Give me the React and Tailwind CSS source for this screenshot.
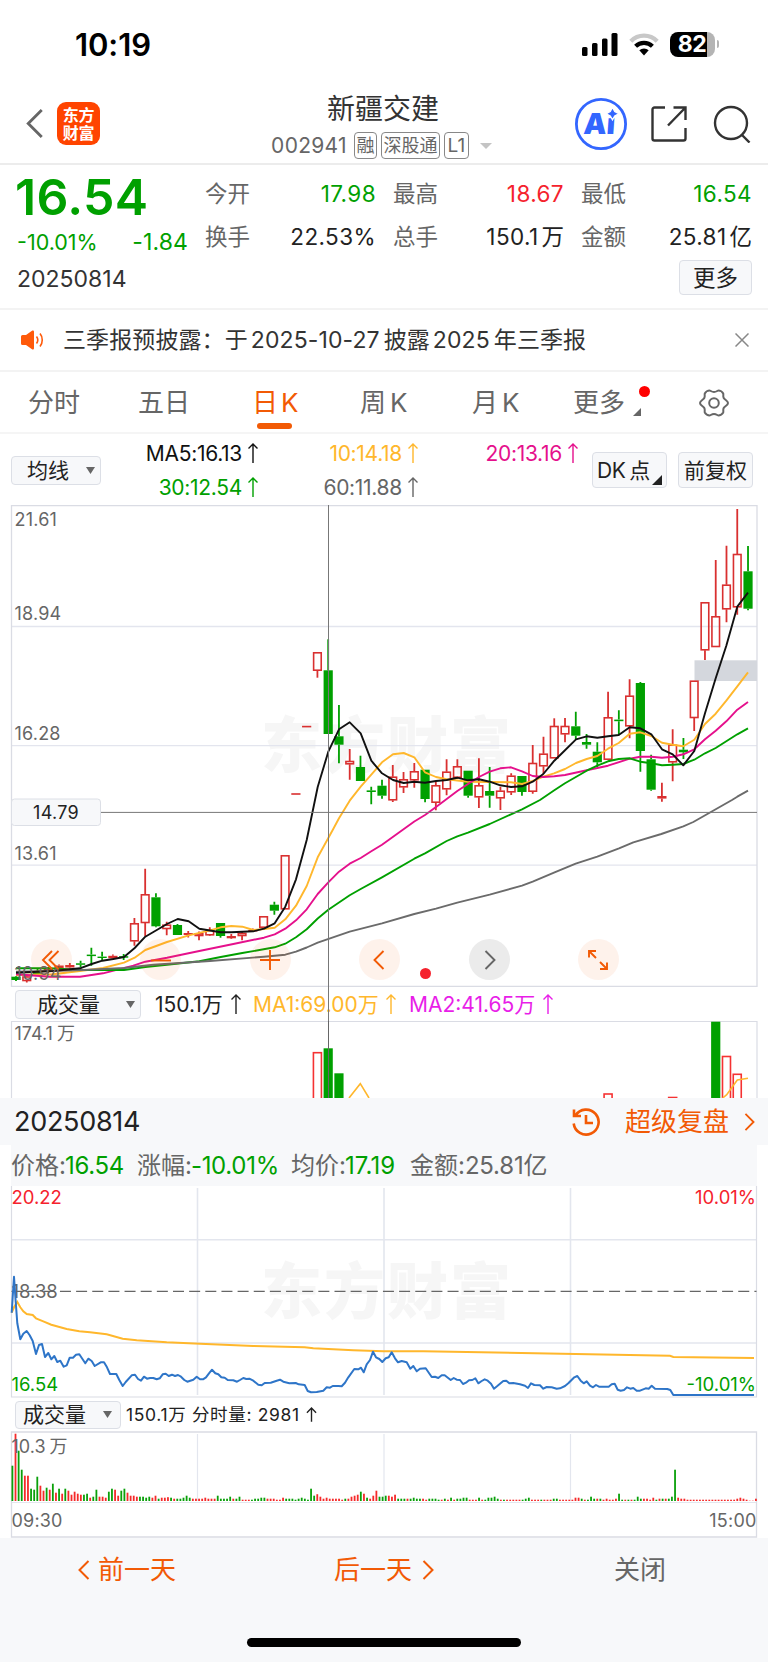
import clsx from "clsx";

const GREEN = "#00a000";
const RED = "#d93030";

// [type, high, bodyTop, bodyBottom, low], one entry per trading day
const CANDLES = [
  ["g", 976, 976.7, 980, 981], ["r", 975, 976.5, 981, 982.5], ["g", 969, 972, 974, 976], ["r", 967, 969, 971, 973],
  ["f", 964.5, 965.5, 968, 969], ["f", 963, 965, 967.5, 968.5], ["g", 960.7, 963.3, 964.8, 967], ["g", 947.7, 954.6, 956.1, 965.7],
  ["g", 951.7, 956.6, 958, 960.5], ["f", 954.5, 955.8, 958.3, 959.5], ["g", 954, 956.2, 957.7, 960], ["r", 918, 923.3, 941.3, 945.7],
  ["r", 868.7, 894.3, 923, 936], ["g", 893.3, 897.3, 926.3, 927.3], ["r", 921.7, 924.7, 929, 935.3], ["g", 924, 925, 935, 935],
  ["f", 931, 933, 935, 937.5], ["r", 931.5, 933.3, 936, 940.3], ["r", 927.3, 930, 935.3, 936], ["g", 923, 923, 936, 937.7],
  ["f", 934, 936, 938.3, 939], ["r", 932, 933, 936, 940.3], ["f", 928.5, 930, 931.5, 932], ["r", 916.3, 916.3, 927.7, 928],
  ["g", 901.7, 904.7, 910.7, 914.7], ["r", 855.3, 855.3, 909.3, 909.3], ["f", 793.2, 793.2, 794.8, 794.8], ["f", 725.8, 725.8, 727.4, 727.4],
  ["r", 652.3, 652.3, 670.7, 677.7], ["g", 639.3, 670.3, 734, 734], ["g", 705, 736.3, 744.7, 763.3], ["r", 749, 761, 764.3, 779.7],
  ["g", 755.7, 767, 781, 781], ["g", 786.7, 790.4, 792, 804.3], ["g", 779.7, 785.7, 795.7, 798.7], ["r", 765, 776.7, 800.3, 802],
  ["r", 772, 779.3, 787.3, 793], ["r", 763, 771.3, 780.3, 787.7], ["g", 769.7, 769.7, 799, 802.3], ["r", 781.7, 785.3, 802.7, 810.3],
  ["r", 759.3, 771.7, 789.3, 795.3], ["r", 759.3, 766.3, 777.7, 779], ["g", 770.7, 770.7, 795.7, 797.7], ["r", 758.3, 785.3, 797.3, 808],
  ["g", 767, 791, 795.7, 807.7], ["r", 786.7, 790.7, 798.3, 810], ["r", 773.3, 775.7, 792.3, 795], ["g", 776, 776, 792, 795.7],
  ["r", 745, 763, 791.7, 793.7], ["r", 736.7, 753.7, 766.3, 773.7], ["r", 718.3, 726, 758.3, 758.3], ["r", 718, 726, 734.3, 742.3],
  ["g", 711.7, 726.3, 735.7, 739], ["g", 734, 742, 744.7, 748.7], ["g", 742.3, 751.7, 762.3, 767], ["r", 691.7, 717.3, 759.7, 759.7],
  ["g", 710.3, 719.6, 721.2, 735.3], ["r", 679.3, 695.7, 726.3, 738.3], ["g", 682, 683, 751, 771.7], ["g", 754.7, 759.3, 789.7, 790.7],
  ["f", 782.7, 796, 798.6, 801.7], ["r", 729.3, 744.7, 762.3, 781.3], ["g", 738, 749.7, 752.3, 759], ["r", 680.7, 680.7, 718, 731],
  ["r", 602.3, 602.3, 650.3, 660], ["r", 560, 616.3, 647, 647], ["r", 545.7, 584.7, 609.3, 622.3], ["r", 509, 554, 607.3, 614.7],
  ["g", 546, 571.3, 608.7, 610.3],
];

const MA_LINES = [
  {
    color: "#ffb72c",
    points: "16,975 53,974.3 80,971 103,968 124,962.7 134.7,957.7 145.3,950 167,942 188.7,935.3 210,930.3 220.7,927.3 231.3,926 242.3,926.7 253.3,930 264,929 274.7,927.7 285.3,919.3 296,905.7 306.7,886 317.7,857.3 332.7,830 339,818.3 349.7,800.7 360.7,786.7 371.3,774.7 382,762.3 393,754.3 403.7,753 414.3,757.3 425,772.3 436,777 446.7,779.3 468,781.7 489.7,782 511,782.3 522,784 532.7,781 543.3,776.7 554,773.3 565,769 576,763 586.7,759 597.3,756 608,748.7 618.7,743 629.7,733.7 640.3,732.3 651.3,736 662,742.7 672.7,744.7 683.3,746.3 694.3,739.7 705,724 715.7,713.7 726.3,700.7 737.3,686.3 748,672.3",
  },
  {
    color: "#e5108c",
    points: "16,974.3 50,976.7 80,976.7 103,973.3 133.3,965.7 145.3,961.7 167,957.7 199.3,951 233.3,944 264,937.7 274.7,934.3 285.3,928.7 296,920.3 306.7,909.3 317.7,894 328.3,882.3 339,871.7 349.7,863.7 360.7,858 371.3,851.3 382,844.7 414.3,821.5 425,815 436,807 446.7,799 457.3,791 468,784 479,777 489.7,771.7 500.3,768.3 511,767.3 522,771.3 532.7,776 543.3,777 554.3,776.3 565,775 586.7,770.3 608,765.7 629.7,758.7 640.3,756.7 651.3,756.7 662,757.7 672.7,756.7 683.3,754.3 694.3,749.3 705,739.3 715.7,730.7 726.3,721.3 737.3,709.7 748,702",
  },
  {
    color: "#00a000",
    points: "16,968.3 50,968.3 80,970 124,970 145.3,967 167,964.7 199.3,961.3 220.7,957 242.3,953 274.7,947.3 285.3,943.7 296,937.3 306.7,929.3 317.7,918.5 328.3,909.7 349.7,895.3 360.7,889 382,877.3 414.3,858.7 425,853.3 446.7,841 457.3,836.3 468,832.7 489.7,824 511,814.3 522,809.3 540,800 554.3,790.3 565,783.3 586.7,770.7 597.3,765.7 608,761.3 618.7,759 629.7,758.3 640.3,761.7 651.3,763.3 662,765.3 672.7,764.7 683.3,764 694.3,759.7 705,753.3 715.7,748 726.3,741.3 737.3,734.3 748,728.3",
  },
  {
    color: "#6b6b6b",
    points: "16,971.7 50,971 83,970 124,968 153.3,964.7 210,961 264,956.7 285.3,954.7 296,951.7 306.7,947.5 317.7,942.7 349.7,931.7 382,923.3 414.3,914 436,908.7 457.3,902.7 489.7,894.7 522,885.7 532.7,881.7 554,872.7 575.7,863.7 597.3,856.7 619,848.3 633.3,842.3 661.3,834 683.3,826.3 693.3,822 732,800 737.3,796.7 748,790.7",
  },
  {
    color: "#111111",
    points: "16,972.7 53,971 80,968.3 91.7,964 102.3,960.7 113.3,959 124,957 134.7,948 145.3,936.7 167,924 177.7,919 188.7,921.3 199.3,928.7 220.7,932.3 231.3,932.3 253.3,931.3 264,928.7 274.7,923.3 285.3,906.7 296,879.3 306.7,840 317.7,787 328.3,751.7 339,729.3 349.7,722.3 360.7,733.3 371.3,760.7 382,773.3 393,780 403.7,783 414.3,781.7 425,782.7 436,781 446.7,780 457.3,777.7 468,780.3 479,779.3 489.7,781.7 500.3,785.3 511,787 522,786.3 532.7,781.7 543.3,774 554.3,760.7 565,750.3 576,739.3 586.7,736.3 597.3,737.7 608,736.3 618.7,735 629.7,727.3 640.3,728.3 651.3,734.3 662,749.3 672.7,754.3 683.3,765.3 694.3,751 705,713.3 715.7,678.3 726.3,645.7 737.3,606.7 748,592.7",
  },
];

const PRICE_LINE =
  "11.7,1312.7 14,1276.7 15.7,1301.7 17.3,1323.3 20.3,1339.3 23.3,1333.7 26.7,1331 29.7,1335.3 32.7,1341 36,1354 39,1345 42,1344 45,1357 48.3,1353 51.3,1359.3 54.3,1356 57.3,1362 60.3,1360.7 63.7,1366.7 66.7,1365.3 69.7,1357.7 73,1357.7 76,1354.7 79.3,1354.3 82.3,1358.7 85.3,1363.3 88.3,1358.7 91.7,1361 94.7,1366 100.7,1362.3 104,1362.3 107,1367.3 110,1374 116.3,1374 119.3,1380 122.7,1386 125.7,1382 131.7,1375.3 135,1374.7 138,1379 141,1380.7 144,1376.7 147,1378.7 150,1378 153.3,1378 156.7,1379.3 159.7,1378.3 162.7,1374.3 165.7,1373.7 168.7,1376 172,1374.7 175,1376 178,1375 181,1376.7 184.3,1380 187.3,1381.7 193.3,1379.7 196.7,1376.7 200,1379.3 203,1379.3 206,1377.3 209,1373.3 212,1369.7 215.3,1373.3 218.3,1374.3 221.3,1377.3 224.7,1377.7 227.7,1380 233.3,1380.3 237,1381.7 240,1380 243.3,1378 246.3,1379 249.3,1378.7 253.3,1380.7 258.3,1384.7 261.7,1385.3 264.7,1383 270.7,1382.7 276.7,1380.7 280,1379.7 283.3,1381.7 289.3,1383.3 295.7,1383 298.7,1384.3 304.7,1385 307.7,1391 311,1392.3 316.7,1392 323.3,1390.7 326.7,1387.3 330,1387.7 332.7,1386 338.3,1386 341.7,1386.3 345,1382.7 348.3,1377.3 354.3,1369 358.3,1369.3 361,1367.7 363.7,1372.3 366.7,1364.3 370,1360 373,1351.7 376,1357.3 379.3,1359 382.3,1362 385.7,1358.3 388.7,1357.3 391.7,1352.3 395,1358.3 398,1362.3 401.7,1361 406.7,1362.3 410.3,1368.7 413.3,1366 416.7,1371.3 420,1368.7 425.7,1368.3 431.7,1377 435,1376.7 438.3,1378 441.7,1375.3 444.7,1375.3 450.7,1380 453.7,1378 456.7,1379.7 460,1380 463,1384 466,1382.7 469,1380.3 472.3,1380 475.3,1378.3 478.3,1383.3 481.7,1381 484.7,1379.3 487.7,1380.7 491,1383.7 494,1388.7 497,1386.3 503.3,1381 506.3,1380.7 509.3,1383.3 513.3,1383 520,1384.3 525,1385.7 528,1388 531,1383.3 534.3,1385 540,1385.3 543.3,1388.7 546.7,1387 551.7,1387.3 556.7,1388.7 560,1388.3 565,1386 568.3,1383.3 574.3,1377.3 577.3,1376 580.7,1380.7 583.7,1383.3 586.7,1381.3 590,1385.7 593,1387.3 596,1385 599,1386.7 608.7,1386.7 611.7,1384.3 614.7,1383.7 617.7,1389.7 620.7,1390.7 624,1390 627,1387.3 630.3,1388.7 633.3,1388 636.7,1390.7 640,1390.7 645.7,1388.3 648.7,1388.7 651.7,1385.7 655,1388.7 667.3,1389 670.3,1390 673.3,1395 754,1395";

const AVG_LINE =
  "11.7,1312.7 14,1307.3 17.3,1302 20.3,1307.3 23.3,1311.3 26.7,1314 32.7,1315 36,1318.3 43.3,1321.3 51.3,1324.7 66.7,1329 79.3,1331.3 90,1332.3 106.7,1334.3 122.7,1338.7 136.7,1340.3 166.7,1342.3 200,1343.7 253.3,1346 304.7,1347.3 313.3,1348.3 353.3,1350.3 383.3,1351.3 423.3,1351.3 670,1355.7 673.3,1357 754,1358";

// minute volume, negative values are down ticks
const MINUTES = [
  35, -67, 50, 31, -25, -25, 12, 11, 24, -15, -10, 13, -11, 17, -8, 12, -7, 12, -10, -6, -9, -7, -6, 6, 7, -3, 4, 11, -4, -4,
  -3, 9, 12, -11, -5, 10, 12, -8, -5, -5, -4, 4, 4, 3, 4, -3, -5, 2, -3, -3, -3.5, 3, -2, 2, 2, 3, 5, 3, -2, -2,
  -2, -2, -3, -2, -2, -2, 5, 2, 2, 2, 4, -2, 2, 4, -1, -1, -1, 1, 2, 2, 3, 3, -2, -2, -2, -1, -1, -3, 2, 2,
  2, 1, 2, 3, 2, 1, 12, 5, -6.5, -4, -2, -3, -2, -2, -2, -2, -1, 2, -2, -4, -5, -6, 9, -7, 3, -2, -5, -10, 4, 4,
  5, -5, -4, -6, 2, 2, 2, -2, 2, 3, 2, 2, -2, -1, 2, 2, 2, 1, -1, 2, -1, 3, -1, 2, 2, 3, 3, -1, -1, -1,
  3, -1, 1, 3, 3, 4, 2, -1, 1, -1, -1, -1, -1, -1, 1, 2, 3, -1, -1, -1, 1, -1, -1, -1, 2, 2, -1, -1, -1, -1,
  -1, -3, -3, 2, -1, 1, 4, 2, -2, 2, -1, -2, -1, -1, -2, 7, 1, -1, 1, -1, 1, 4, 2, -2, -2, -1, -3, 1, -2, 2,
  -2, 2, 4, 31, -3, -2, -2, -1, -1, -1, -1, -1, -1, -1, -1, -1, -1, -1, -1, -1, -1, -1, -1, -2, -3, -2, -1, 0, 0, -2,
];

const STATS = [
  [
    { label: "今开", value: "17.98", tone: "text-[#00a000]" },
    { label: "换手", value: "22.53%", tone: "text-[#222]" },
  ],
  [
    { label: "最高", value: "18.67", tone: "text-[#f5222d]" },
    { label: "总手", value: "150.1", unit: "万", tone: "text-[#222]" },
  ],
  [
    { label: "最低", value: "16.54", tone: "text-[#00a000]" },
    { label: "金额", value: "25.81", unit: "亿", tone: "text-[#222]" },
  ],
];

const candleX = (i) => 16 + i * 10.765;

function Chevron({ left, className, width = 2 }) {
  return (
    <svg viewBox="0 0 12 20" className={className} fill="none" stroke="currentColor" strokeWidth={width}>
      <path d={left ? "M10.5 1L1.5 10l9 9" : "M1.5 1l9 9-9 9"} />
    </svg>
  );
}

function Up() {
  return (
    <svg viewBox="0 0 12 20" className="ml-[5px] inline-block h-5 w-3 shrink-0" fill="none" stroke="currentColor" strokeWidth="1.4">
      <path d="M6 20V1M1.500 5.500L6 1l4.500 4.500" />
    </svg>
  );
}

function Dropdown({ children, className }) {
  return (
    <div className={clsx("flex items-center justify-between rounded-[4px] border border-[#dcdfe6] bg-[#f7f8fa] text-[21px] leading-none text-[#222]", className)}>
      <span>{children}</span>
      <svg viewBox="0 0 9 7" className="h-[7px] w-[9px]">
        <path d="M0 0h9L4.500 7z" fill="#666" />
      </svg>
    </div>
  );
}

function StatusBar() {
  return (
    <div className="flex h-[88px] items-center pr-[49px] pl-[75px]">
      <span className="text-[31px] leading-none font-semibold tracking-[-0.1px] text-black">10:19</span>
      <div className="ml-auto flex items-center gap-[11px]">
        <svg viewBox="0 0 36 23" className="h-[23px] w-9">
          <rect x="0" y="14" width="5.500" height="9" rx="1.500" />
          <rect x="10" y="10" width="5.500" height="13" rx="1.500" />
          <rect x="20" y="5.500" width="5.500" height="17.500" rx="1.500" />
          <rect x="29.500" y="0" width="6" height="23" rx="1.500" />
        </svg>
        <svg viewBox="0 0 30 23" className="h-[23px] w-[30px]" fill="none" strokeWidth="4.200">
          <path d="M1.800 8.200a18.500 18.500 0 0 1 26.400 0" stroke="#c8c8c8" />
          <path d="M6.600 13.300a12 12 0 0 1 16.800 0" stroke="#000" />
          <path d="M15 22.500l-4.700-5.300a7 7 0 0 1 9.400 0z" fill="#000" />
        </svg>
        <div className="flex items-center gap-[2px]">
          <div className="flex h-[25px] w-[45px] items-center justify-center rounded-[8px] bg-[linear-gradient(90deg,#000_82%,#b4b4b4_82%)] text-[23px] leading-none font-bold tracking-[-0.5px] text-white">
            82
          </div>
          <div className="h-2 w-[2.5px] rounded-r-full bg-[#b4b4b4]" />
        </div>
      </div>
    </div>
  );
}

function Header() {
  return (
    <div className="grid h-[77px] grid-cols-[240px_1fr_240px] border-b-2 border-[#ececec]">
      <div className="flex items-center gap-[13px] pb-[4px] pl-[26px]">
        <Chevron left className="h-[31px] w-[18px] text-[#666]" width={1.9} />
        <div className="flex h-[43px] w-[43px] flex-col items-center justify-center rounded-[9px] bg-[#ff4400] text-[16px] leading-[18px] font-bold tracking-[-0.3px] text-white">
          <span>东方</span>
          <span>财富</span>
        </div>
      </div>
      <div className="flex flex-col items-center pt-[5px]">
        <div className="-ml-[2px] text-[28px] leading-[32px] text-[#333]">新疆交建</div>
        <div className="mt-[7px] -ml-[5px] flex items-center text-[21px] leading-none text-[#666]">
          <span className="mr-[7px] tracking-[0.3px]">002941</span>
          <span className="mr-1 flex h-[27px] w-[23px] items-center justify-center rounded-[4px] border border-[#888] text-[18px]">融</span>
          <span className="mr-1 flex h-[27px] w-[59px] items-center justify-center rounded-[4px] border border-[#888] text-[18px]">深股通</span>
          <span className="flex h-[27px] w-[25px] items-center justify-center rounded-[4px] border border-[#888] text-[19px]">L1</span>
          <svg viewBox="0 0 12 6" className="ml-[11px] h-[6px] w-3">
            <path d="M0 0h12L6 6z" fill="#c4c4c4" />
          </svg>
        </div>
      </div>
      <div className="flex items-center justify-end pr-[17px] pb-[4px]">
        <svg viewBox="0 0 54 54" className="h-[54px] w-[54px]">
          <circle cx="27" cy="27" r="24.600" fill="none" stroke="#3366ff" strokeWidth="2.800" />
          <text x="25.500" y="37.500" textAnchor="middle" fontSize="29" fontWeight="900" fill="#3366ff" transform="skewX(-4) translate(2 0)">
            Ai
          </text>
          <path d="M38.500 10.500l2.200 4 4 2.200-4 2.200-2.200 4-2.200-4-4-2.200 4-2.200z" fill="#3366ff" stroke="#fff" strokeWidth="1.200" />
        </svg>
        <svg viewBox="0 0 36 36" className="ml-[23px] h-9 w-9" fill="none" stroke="#333" strokeWidth="2.400">
          <path d="M14 1.500H3.500a2 2 0 0 0-2 2v29a2 2 0 0 0 2 2h29a2 2 0 0 0 2-2V22M22.500 1.500h12V14M34 2L17 19.500" />
        </svg>
        <svg viewBox="0 0 38 38" className="ml-[26px] h-[38px] w-[38px]" fill="none" stroke="#333" strokeWidth="2.400">
          <circle cx="18" cy="18" r="16" />
          <path d="M29 30l7.500 7.500" />
        </svg>
      </div>
    </div>
  );
}

function Quote() {
  return (
    <div className="h-[145px] border-b-2 border-[#f3f3f3] pr-4 pl-[17px]">
      <div className="flex">
        <div className="w-[188px] pt-[7px]">
          <div className="-ml-[2px] text-[50px] leading-[50px] font-semibold tracking-[0.3px] text-[#00a000]">16.54</div>
          <div className="mt-[7px] flex w-[171px] items-center justify-between leading-[26px] text-[#00a000]">
            <span className="text-[21.5px] tracking-[0px]">-10.01%</span>
            <span className="text-[23px] tracking-[0.1px]">-1.84</span>
          </div>
        </div>
        <div className="grid flex-1 grid-cols-3 gap-[17px] pt-[7px]">
          {STATS.map((col) => (
            <div key={col[0].label}>
              {col.map((s) => (
                <div key={s.label} className="flex h-[43px] items-center justify-between text-[22.5px]">
                  <span className="text-[#666]">{s.label}</span>
                  <span className={clsx("flex items-center", s.tone)}>
                    <span className="tracking-[0.4px]">{s.value}</span>
                    {s.unit && <span className="ml-[3px]">{s.unit}</span>}
                  </span>
                </div>
              ))}
            </div>
          ))}
        </div>
      </div>
      <div className="mt-[2px] flex items-start justify-between">
        <span className="pt-[5px] text-[23px] leading-[28px] text-[#333]">20250814</span>
        <div className="flex h-[35px] w-[73px] items-center justify-center rounded-[4px] border border-[#dcdfe6] bg-[#f7f8fa] text-[22.5px] text-[#222]">
          更多
        </div>
      </div>
    </div>
  );
}

function Notice() {
  return (
    <div className="flex h-[62px] items-center border-b-2 border-[#f3f3f3] pr-[19px] pl-5">
      <svg viewBox="0 0 24 20" className="h-5 w-6" fill="none" stroke="#ff5a0a" strokeWidth="1.600">
        <path d="M1 6.500a1.500 1.500 0 0 1 1.500-1.500h3.500l6-4.200c1-.6 2 0 2 1v16.400c0 1-1 1.600-2 1L6 15H2.500A1.500 1.500 0 0 1 1 13.500z" fill="#ff5a0a" stroke="none" />
        <path d="M16.500 6.500c1.500 2 1.500 5 0 7M20 3.500c3 3.500 3 9.500 0 13" />
      </svg>
      <div className="ml-[19px] flex items-center text-[23px] tracking-[0.1px] text-[#333]">
        三季报预披露：于
        <span className="ml-[3px]">2025-10-27</span>
        <span className="ml-[4px]">披露</span>
        <span className="ml-[3px]">2025</span>
        <span className="ml-[4px]">年三季报</span>
      </div>
      <svg viewBox="0 0 14 14" className="ml-auto h-[14px] w-[14px]" stroke="#888" strokeWidth="1.500">
        <path d="M.5.5l13 13M13.500.5l-13 13" />
      </svg>
    </div>
  );
}

function Tabs() {
  return (
    <div className="flex h-[62px] items-center border-b-2 border-[#f5f5f5] pt-[2px] pl-7 text-[26px] leading-none text-[#666]">
      <span className="w-[110px]">分时</span>
      <span className="w-[114px]">五日</span>
      <span className="relative w-[108px] text-[#f25a05]">
        日<span className="ml-[3px]">K</span>
        <span className="absolute top-[33px] left-[5px] h-[6px] w-[35px] rounded-[3px] bg-[#f25a05]" />
      </span>
      <span className="w-[112px]">
        周<span className="ml-[4px]">K</span>
      </span>
      <span className="w-[101px]">
        月<span className="ml-[4px]">K</span>
      </span>
      <span className="relative w-[126px]">
        更多
        <svg viewBox="0 0 8 8" className="absolute top-[18px] left-[60px] h-2 w-2">
          <path d="M8 0v8H0z" fill="#666" />
        </svg>
        <span className="absolute -top-[4px] left-[66px] h-[11px] w-[11px] rounded-full bg-[#ff0000]" />
      </span>
      <svg viewBox="0 0 30 30" className="h-[30px] w-[30px]" fill="none" stroke="#666" strokeWidth="2">
        <path d="M10.500 2.500c1 0 2 1.500 4.500 1.500s3.500-1.500 4.500-1.500c1.500 0 4 1.500 4.700 3 .5 1.200-.5 2.500.5 4.500s4.300 2.500 4.300 5-3.300 3-4.300 5 0 3.300-.5 4.500c-.7 1.500-3.200 3-4.700 3-1 0-2-1.500-4.500-1.500s-3.500 1.500-4.500 1.500c-1.500 0-4-1.500-4.700-3-.5-1.200.5-2.500-.5-4.500S1 17.500 1 15s3.300-3 4.300-5 0-3.300.5-4.500c.7-1.500 3.200-3 4.700-3z" />
        <circle cx="15" cy="15" r="4.800" />
      </svg>
    </div>
  );
}

function MaBar() {
  return (
    <div className="flex h-[71px] pl-[11px]">
      <Dropdown className="mt-[22px] h-[29px] w-[90px] pr-[5px] pl-[15px]">均线</Dropdown>
      <div className="grid h-[70px] w-[478px] grid-cols-[158px_160px_160px] grid-rows-2 items-center pt-[2px] text-[21px] leading-none tracking-[-0.3px] [&>div]:flex [&>div]:items-center [&>div]:justify-end">
        <div className="text-[#111]">MA5:16.13<Up /></div>
        <div className="text-[#ffb72c]">10:14.18<Up /></div>
        <div className="text-[#e5108c]">20:13.16<Up /></div>
        <div className="text-[#00a000]">30:12.54<Up /></div>
        <div className="text-[#666]">60:11.88<Up /></div>
      </div>
      <div className="mt-[18px] ml-[13px] flex gap-[11px] text-[21px] leading-none text-[#222]">
        <div className="relative flex h-9 w-[75px] items-center rounded-[4px] border border-[#dcdfe6] bg-[#f7f8fa] pl-1">
          <span className="tracking-[-0.5px]">DK</span>
          <span className="ml-[4px]">点</span>
          <svg viewBox="0 0 10 10" className="absolute right-[4px] bottom-[2px] h-[10px] w-[10px]">
            <path d="M10 0v10H0z" fill="#222" />
          </svg>
        </div>
        <div className="flex h-9 w-[75px] items-center justify-center rounded-[4px] border border-[#dcdfe6] bg-[#f7f8fa]">前复权</div>
      </div>
    </div>
  );
}

function Candle({ d, i }) {
  const [type, high, top, bottom, low] = d;
  const x = candleX(i);
  const color = type === "g" ? GREEN : RED;
  const h = bottom - top;
  return (
    <g stroke={color} strokeWidth="1.800">
      <path d={`M${x} ${high}V${top}M${x} ${bottom}V${low}`} />
      {type === "r" ? (
        <rect x={x - 3.8} y={top + 0.5} width="7.600" height={Math.max(h - 1, 1)} fill="none" strokeWidth="1.600" />
      ) : (
        <rect x={x - 4.6} y={top} width="9.200" height={Math.max(h, 1.4)} fill={color} stroke="none" />
      )}
    </g>
  );
}

function ToolButton({ gray, children }) {
  return (
    <div className={clsx("flex h-[41px] w-[41px] items-center justify-center rounded-full", gray ? "bg-[#ebebeb] text-[#666]" : "bg-[#f25a05]/8 text-[#f25a05]")}>
      <svg viewBox="0 0 22 22" className="h-[22px] w-[22px]" fill="none" stroke="currentColor" strokeWidth="1.900">
        {children}
      </svg>
    </div>
  );
}

function KLineChart() {
  return (
    <div className="relative h-[482px]">
      <svg viewBox="0 505 768 482" className="h-[482px] w-[768px]" fill="none">
        <text x="387" y="768" textAnchor="middle" fontSize="61" fontWeight="900" letterSpacing="2" fill="#f6f6f6">东方财富</text>
        <g stroke="#e3e5ee" strokeWidth="1.300">
          <path d="M11.500 626.500H757M11.500 745.700H757M11.500 865.200H757" />
          <path d="M11.500 986.300V505.700H757V986.300z" stroke="#dadce4" />
        </g>
        <rect x="694.500" y="660.300" width="62.500" height="20.700" fill="#d4d7dd" />
        {CANDLES.map((d, i) => (
          <Candle key={i} d={d} i={i} />
        ))}
        {MA_LINES.map((l) => (
          <polyline key={l.color} points={l.points} stroke={l.color} strokeWidth="1.900" strokeLinejoin="round" />
        ))}
        <path d="M328.500 505V987M11.500 812.400H757" stroke="#777" strokeWidth="1" />
        <g fontSize="18" fill="#666" letterSpacing="0.200">
          <text x="14.500" y="525.500">21.61</text>
          <text x="14.500" y="620">18.94</text>
          <text x="14.500" y="740">16.28</text>
          <text x="14.500" y="860">13.61</text>
          <text x="14.500" y="980">10.94</text>
        </g>
        <rect x="11.500" y="799" width="89" height="26.500" rx="3" fill="#f7f8fa" stroke="#dcdfe6" />
        <text x="56" y="819" textAnchor="middle" fontSize="18" letterSpacing="0.300" fill="#222">14.79</text>
      </svg>
      <div className="absolute top-[434px] left-[31px] flex gap-[68.4px]">
        <ToolButton>
          <path d="M11 2l-9 9 9 9M17.500 2l-9 9 9 9" />
        </ToolButton>
        <ToolButton>
          <path d="M1 11.500h20" />
        </ToolButton>
        <ToolButton>
          <path d="M1 11h20M11 1v20" />
        </ToolButton>
        <ToolButton>
          <path d="M14.500 2l-9 9 9 9" />
        </ToolButton>
        <ToolButton gray>
          <path d="M7.500 2l9 9-9 9" />
        </ToolButton>
        <ToolButton>
          <path d="M2 8.500V2h7M2 2l7 7M20 13.500V20h-7M20 20l-7-7" />
        </ToolButton>
      </div>
      <span className="absolute top-[463px] left-[420px] h-[11px] w-[11px] rounded-full bg-[#f5222d]" />
    </div>
  );
}

function VolumeChart() {
  const hollow = [[28, 1052.7], [55, 1094], [61, 1097.5], [66, 1056.5], [67, 1074.3]];
  const solid = [[29, 1048.3], [30, 1073.3], [65, 1021.7]];
  return (
    <>
      <div className="relative flex h-[34px] items-center pl-[15px] text-[21px] leading-none">
        <Dropdown className="h-[29px] w-[126px] pr-[5px] pl-[21px]">成交量</Dropdown>
        <span className="ml-[14px] flex w-[98px] items-center text-[#222]">150.1万<span className="ml-[2px] flex"><Up /></span></span>
        <span className="flex w-[156px] items-center text-[#ffb72c]">MA1:69.00万<span className="ml-[1px] flex"><Up /></span></span>
        <span className="flex items-center text-[#e81ee8]">MA2:41.65万<span className="ml-[2px] flex"><Up /></span></span>
        <span className="absolute inset-y-0 left-[328px] w-px bg-[#777]" />
      </div>
      <svg viewBox="0 1021 768 77" className="block h-[77px] w-[768px]" fill="none">
        <path d="M11.500 1110V1021.500H757V1110" stroke="#dadce4" strokeWidth="1.200" />
        {hollow.map(([i, top]) => (
          <rect key={i} x={candleX(i) - 4} y={top} width="8" height="60" stroke="#f53232" strokeWidth="1.600" />
        ))}
        {solid.map(([i, top]) => (
          <rect key={i} x={candleX(i) - 4.6} y={top} width="9.200" height="90" fill={GREEN} />
        ))}
        <path d="M349 1098l11.300-14.300 8.700 14.300M722.700 1098l4-3.300 10.600-14.700 10.700-1.700" stroke="#ffb72c" strokeWidth="1.600" />
        <path d="M328.500 1021V1098" stroke="#666" />
        <text x="14.500" y="1039.500" fontSize="18" fill="#666">
          174.1<tspan dx="4">万</tspan>
        </text>
      </svg>
    </>
  );
}

function DayPanel() {
  return (
    <>
      <div className="flex h-[47px] items-center bg-[#f7f8fa] pr-[13px] pl-[14px]">
        <span className="text-[27px] leading-none tracking-[-0.3px] text-[#222]">20250814</span>
        <div className="ml-auto flex items-center text-[26px] leading-none text-[#f25a05]">
          <svg viewBox="0 0 30 30" className="mr-[24px] h-[30px] w-[30px]" fill="none" stroke="currentColor" strokeWidth="2.600">
            <path d="M4.500 8.500a12.500 12.500 0 1 1-1.800 8M3 2.500V9h7" />
            <path d="M15 8v8h7" />
          </svg>
          超级复盘
          <Chevron className="ml-[15px] h-[18px] w-[11px]" />
        </div>
      </div>
      <div className="mx-[11px] flex h-[41px] items-center bg-[#f7f8fa] text-[24px] leading-none text-[#666]">
        <span className="w-[126px]">价格:<span className="-ml-px tracking-[-0.3px] text-[#00a000]">16.54</span></span>
        <span className="w-[154px]">涨幅:<span className="-ml-px tracking-[-0.3px] text-[#00a000]">-10.01%</span></span>
        <span className="w-[119px]">均价:<span className="-ml-px tracking-[0.1px] text-[#00a000]">17.19</span></span>
        <span>金额:<span className="tracking-[-0.2px]">25.81</span>亿</span>
      </div>
      <svg viewBox="0 1186 768 212" className="block h-[212px] w-[768px]" fill="none">
        <text x="387" y="1314" textAnchor="middle" fontSize="61" fontWeight="900" letterSpacing="2" fill="#f6f6f6">东方财富</text>
        <g stroke="#e3e6ee" strokeWidth="1.600">
          <path d="M11.500 1239.800H756.500M11.500 1343H756.500M197.500 1188V1395M384 1188V1395M570.500 1188V1395" />
          <path d="M11.500 1186V1397H756.500V1186" stroke="#dadce4" strokeWidth="1.200" />
        </g>
        <path d="M11.500 1291.400H756.500" stroke="#666" strokeWidth="1.300" strokeDasharray="11 5.150" />
        <text x="11.500" y="1297.500" fontSize="18.500" fill="#666">18.38</text>
        <polyline points={AVG_LINE} stroke="#ffb72c" strokeWidth="2" />
        <polyline points={PRICE_LINE} stroke="#2e75c8" strokeWidth="2" strokeLinejoin="round" />
        <g fontSize="18.500">
          <text x="11.500" y="1204" fill="#f5222d">20.22</text>
          <text x="756" y="1204" textAnchor="end" fill="#f5222d">10.01%</text>
          <text x="11.500" y="1390.500" fill={GREEN}>16.54</text>
          <text x="756" y="1390.500" textAnchor="end" fill={GREEN}>-10.01%</text>
        </g>
      </svg>
      <div className="flex h-[33px] items-center pl-[15px]">
        <Dropdown className="h-7 w-[106px] pr-[8px] pl-[7px]">成交量</Dropdown>
        <span className="ml-[5px] flex items-center text-[17.5px] leading-none tracking-[0.65px] whitespace-pre text-[#222]">
          150.1万 分时量: 2981
          <svg viewBox="0 0 12 16" className="ml-[6px] h-[15px] w-[11px]" fill="none" stroke="currentColor" strokeWidth="1.500">
            <path d="M6 16V1M1 6l5-5 5 5" />
          </svg>
        </span>
      </div>
      <svg viewBox="0 1431 768 107" className="block h-[107px] w-[768px]" fill="none">
        <path d="M197.500 1434V1501M384 1434V1501M570.500 1434V1501M11.500 1502.500H756.500" stroke="#e3e6ee" strokeWidth="1.200" />
        <path d="M11.500 1432H756.500V1537H11.500z" stroke="#dadce4" strokeWidth="1.300" />
        {MINUTES.map((v, i) => (
          <rect key={i} x={11.5 + i * 3.111} y={1501 - Math.abs(v) - 0.3} width="1.800" height={Math.abs(v) + 0.3} fill={v > 0 ? "#0aa00a" : "#f52a2a"} />
        ))}
        <g fontSize="18" fill="#666">
          <text x="11.500" y="1452.500">
            10.3<tspan dx="4">万</tspan>
          </text>
          <text x="11.500" y="1526.500" letterSpacing="0.200">09:30</text>
          <text x="756.500" y="1526.500" textAnchor="end" letterSpacing="0.200">15:00</text>
        </g>
      </svg>
    </>
  );
}

function BottomBar() {
  return (
    <div className="flex h-[124px] flex-col items-center justify-between bg-[#f7f8fa] pb-[15px]">
      <div className="flex h-[64px] w-full items-center text-[26px] leading-none text-[#f25a05]">
        <div className="flex w-1/3 items-center justify-center gap-[8px] pr-[2px]">
          <Chevron left className="h-5 w-3" />
          前一天
        </div>
        <div className="flex w-1/3 items-center justify-center gap-[10px]">
          后一天
          <Chevron className="h-5 w-3" />
        </div>
        <div className="w-1/3 text-center text-[#666]">关闭</div>
      </div>
      <div className="h-[9px] w-[274px] rounded-full bg-black" />
    </div>
  );
}

export default function App() {
  return (
    <div className="h-[1662px] w-[768px] overflow-hidden bg-white font-[Inter,'Noto_Sans_CJK_SC',sans-serif]">
      <StatusBar />
      <Header />
      <Quote />
      <Notice />
      <Tabs />
      <MaBar />
      <KLineChart />
      <VolumeChart />
      <DayPanel />
      <BottomBar />
    </div>
  );
}
